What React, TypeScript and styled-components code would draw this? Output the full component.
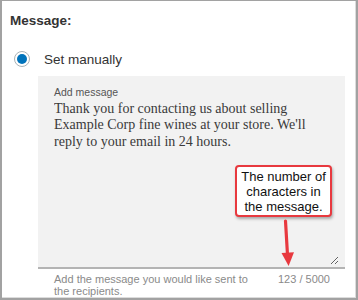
import React from 'react';
import styled, { createGlobalStyle } from 'styled-components';

const GlobalStyle = createGlobalStyle`
  body {
    margin: 0;
    background: #ffffff;
    font-family: 'Liberation Sans', Arial, sans-serif;
  }
`;

const Frame = styled.div`
  position: relative;
  box-sizing: border-box;
  width: 358px;
  height: 300px;
  border: 2px solid #a2a2a2;
  border-top-width: 1px;
  padding: 12px 0 0 8px;
  box-shadow: inset -1px -1px 0 #dcdcdc;
  overflow: hidden;
`;

const Heading = styled.div`
  font-size: 13.5px;
  font-weight: bold;
  line-height: 16px;
  color: #333333;
`;

const RadioRow = styled.label`
  display: flex;
  align-items: center;
  margin: 22px 0 0 4px;
  height: 16px;
  font-size: 13.5px;
  color: #333333;
  gap: 14px;
`;

const RadioDot = styled.span<{ checked?: boolean }>`
  position: relative;
  box-sizing: border-box;
  width: 16px;
  height: 16px;
  border-radius: 50%;
  border: 1px solid #a9b2b6;
  background: #ffffff;

  &::after {
    content: '';
    position: absolute;
    left: 2px;
    top: 2px;
    width: 10px;
    height: 10px;
    border-radius: 50%;
    background: ${(p) => (p.checked ? '#0073bb' : 'transparent')};
  }
`;

const MessageBox = styled.div`
  box-sizing: border-box;
  width: 307px;
  height: 193px;
  margin: 9px 0 0 28px;
  padding: 10px 0 0 16px;
  background: #f2f2f2;
  border-bottom: 2px solid #b4b4b4;
`;

const FieldLabel = styled.div`
  font-size: 10.5px;
  line-height: 12px;
  color: #555555;
`;

const MessageInput = styled.textarea`
  display: block;
  box-sizing: border-box;
  width: 285px;
  height: 164px;
  margin-top: 3px;
  padding: 0 20px 0 0;
  border: none;
  outline: none;
  background: transparent;
  font-family: 'Liberation Serif', 'Times New Roman', serif;
  font-size: 14px;
  line-height: 16.3px;
  color: #3a3a3a;
  resize: vertical;
  overflow: hidden;
`;

const Footer = styled.div`
  display: flex;
  justify-content: space-between;
  width: 276px;
  margin: 4px 0 0 44px;
  font-size: 11px;
  line-height: 12px;
  color: #8a8a8a;
`;

const Hint = styled.div`
  max-width: 210px;
`;

const Callout = styled.div`
  position: absolute;
  left: 233px;
  top: 164px;
  box-sizing: border-box;
  width: 97px;
  height: 52px;
  padding-top: 2px;
  border: 2px solid #e8393f;
  border-radius: 4px;
  background: #ffffff;
  box-shadow: 1px 2px 3px rgba(0, 0, 0, 0.3);
  font-size: 13px;
  line-height: 15px;
  color: #111111;
  text-align: center;
`;

const Arrow = styled.svg`
  position: absolute;
  left: 274px;
  top: 218px;
  overflow: visible;
`;

const App = () => {
  return (
    <>
      <GlobalStyle />
      <Frame>
        <Heading>Message:</Heading>
        <RadioRow>
          <RadioDot checked />
          Set manually
        </RadioRow>
        <MessageBox>
          <FieldLabel>Add message</FieldLabel>
          <MessageInput
            defaultValue={
              "Thank you for contacting us about selling Example Corp fine wines at your store. We'll reply to your email in 24 hours."
            }
          />
        </MessageBox>
        <Footer>
          <Hint>Add the message you would like sent to the recipients.</Hint>
          <span>123 / 5000</span>
        </Footer>
        <Callout>
          The number of
          <br />
          characters in
          <br />
          the message.
        </Callout>
        <Arrow width="24" height="50" viewBox="0 0 24 50">
          <path d="M9.5 2 L11.5 36" stroke="#e8393f" strokeWidth="3.2" strokeLinecap="round" />
          <path d="M5.5 34 L18 33.3 L12.6 47 Z" fill="#e8393f" />
        </Arrow>
      </Frame>
    </>
  );
};

export default App;
